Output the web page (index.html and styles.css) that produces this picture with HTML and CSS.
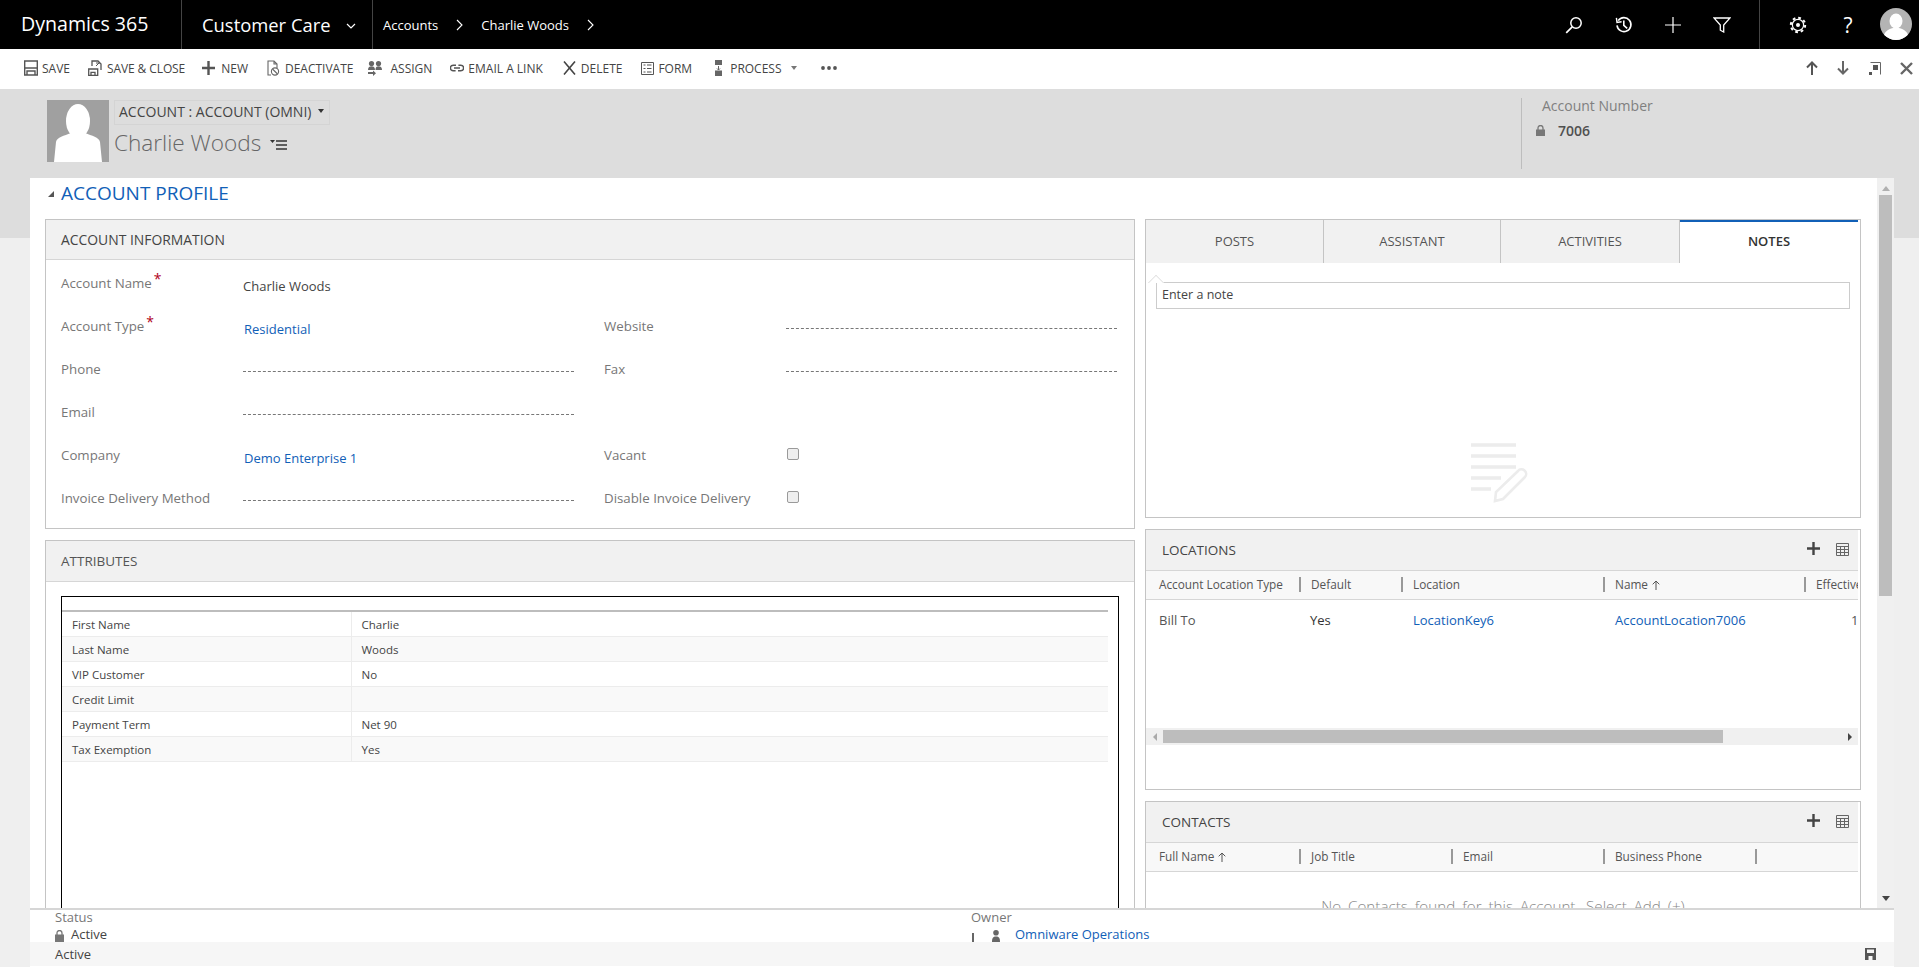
FILE: index.html
```html
<!DOCTYPE html>
<html lang="en">
<head>
<meta charset="utf-8">
<title>Charlie Woods - Dynamics 365</title>
<link rel="stylesheet" href="styles.css">
</head>
<body>
<header class="topbar">
  <div class="brand">Dynamics 365</div>
  <div class="app"><span>Customer Care</span>
    <svg class="chev" width="10" height="6" viewBox="0 0 10 6"><path d="M1 1l4 4 4-4" fill="none" stroke="#fff" stroke-width="1.2"/></svg>
  </div>
  <nav class="crumbs">
    <span>Accounts</span>
    <svg width="7" height="12" viewBox="0 0 7 12"><path d="M1 1l5 5-5 5" fill="none" stroke="#fff" stroke-width="1.1"/></svg>
    <span>Charlie Woods</span>
    <svg width="7" height="12" viewBox="0 0 7 12"><path d="M1 1l5 5-5 5" fill="none" stroke="#fff" stroke-width="1.1"/></svg>
  </nav>
  <div class="tools">
    <svg class="t-search" width="18" height="18" viewBox="0 0 18 18"><circle cx="11" cy="7" r="5.2" fill="none" stroke="#fff" stroke-width="1.5"/><path d="M7.2 10.8L1.2 16.8" stroke="#fff" stroke-width="1.7"/></svg>
    <svg class="t-hist" width="18" height="18" viewBox="0 0 18 18"><path d="M3.2 4.6A7 7 0 1 1 2 9.4" fill="none" stroke="#fff" stroke-width="1.6"/><path d="M1.4 1.8l.6 4.6 4.6-.6" fill="none" stroke="#fff" stroke-width="1.4"/><path d="M8.8 4.6v4.8l3.4 3" fill="none" stroke="#fff" stroke-width="1.6"/></svg>
    <svg class="t-plus" width="16" height="16" viewBox="0 0 16 16"><path d="M8 0v16M0 8h16" stroke="#fff" stroke-width="1.2"/></svg>
    <svg class="t-filter" width="18" height="16" viewBox="0 0 18 16"><path d="M1 1h16l-6.300 7v7l-3.400-1.800V8z" fill="none" stroke="#fff" stroke-width="1.300"/></svg>
  </div>
  <div class="tools2">
    <svg class="t-gear" width="18" height="18" viewBox="0 0 18 18"><circle cx="9" cy="9" r="7.200" fill="none" stroke="#fff" stroke-width="2" stroke-dasharray="2.800 2.850"/><circle cx="9" cy="9" r="5.600" fill="none" stroke="#fff" stroke-width="1.200"/><circle cx="9" cy="9" r="2" fill="#fff"/></svg>
    <span class="t-help">?</span>
    <svg class="t-avatar" width="32" height="32" viewBox="0 0 32 32"><defs><clipPath id="av"><circle cx="16" cy="16" r="16"/></clipPath></defs><circle cx="16" cy="16" r="16" fill="#b4b4b4"/><g clip-path="url(#av)" fill="#fff"><ellipse cx="16" cy="13" rx="6.500" ry="7.500"/><path d="M3 32c0-8 5-11 10-12h6c5 1 10 4 10 12z"/></g></svg>
  </div>
</header>

<div class="toolbar">
  <div class="cmds">
    <div class="cmd c-save"><svg width="14" height="16" viewBox="0 0 14 16"><path d="M.7 1h12.600v14H.7zM.7 8h12.600M3 15v-4h8v4" fill="none" stroke="#555" stroke-width="1.400"/></svg><span>SAVE</span></div>
    <div class="cmd c-close"><svg width="15" height="16" viewBox="0 0 15 16"><path d="M4 6V1h6l3 3v6M.7 9h9v6.300h-9zM3 15.300v-3h4v3" fill="none" stroke="#555" stroke-width="1.300"/><path d="M8 3h4M8 6l3-3" stroke="#555"/></svg><span>SAVE &amp; CLOSE</span></div>
    <div class="cmd c-new"><svg width="13" height="14" viewBox="0 0 13 14"><path d="M6.500 0v14M0 7h13" stroke="#555" stroke-width="2.400"/></svg><span>NEW</span></div>
    <div class="cmd c-deact"><svg width="14" height="16" viewBox="0 0 14 16"><path d="M5 15H2V1h6l3 3v4M8 1v3h3" fill="none" stroke="#666" stroke-width="1.100"/><circle cx="9" cy="11.500" r="3.600" fill="none" stroke="#666" stroke-width="1.100"/><path d="M6.500 9l5 5" stroke="#666" stroke-width="1.100"/></svg><span>DEACTIVATE</span></div>
    <div class="cmd c-assign"><svg width="16" height="16" viewBox="0 0 16 16" fill="#666"><circle cx="4.500" cy="3.500" r="2.600"/><circle cx="11.500" cy="3.500" r="2.600"/><path d="M1 10c0-3 1.500-3.800 3.500-3.800S8 7 8 10zM8.500 10c0-3 1-3.800 3-3.800s3.500.8 3.500 3.800z"/><path d="M1 12h5v-1.500l3 2.800-3 2.700V14H1z"/></svg><span>ASSIGN</span></div>
    <div class="cmd c-mail"><svg width="14" height="8" viewBox="0 0 14 8"><path d="M6 1.200H3.200a2.800 2.800 0 0 0 0 5.600h2.400M8 6.800h2.800a2.800 2.800 0 0 0 0-5.600H8.400M4 4h6" fill="none" stroke="#555" stroke-width="1.400"/></svg><span>EMAIL A LINK</span></div>
    <div class="cmd c-del"><svg width="13" height="14" viewBox="0 0 13 14"><path d="M1 .5l11 13M12 .5L1 13.500" stroke="#444" stroke-width="1.600"/></svg><span>DELETE</span></div>
    <div class="cmd c-form"><svg width="13" height="13" viewBox="0 0 13 13"><path d="M.5.500h12v12H.5z" fill="none" stroke="#555"/><path d="M2.500 3h2M2.500 6.500h2M2.500 10h2M6 3h4.500M6 6.500h4.500M6 10h4.500" stroke="#555" stroke-width="1.200"/></svg><span>FORM</span></div>
    <div class="cmd c-proc"><svg width="9" height="16" viewBox="0 0 9 16"><path d="M1 0h7v5H1zM1 10.500h7V16H1z" fill="#666"/><path d="M4.500 6v4M3 8.500l1.500 1.500L6 8.500" fill="none" stroke="#666"/></svg><span>PROCESS</span><i class="caret"></i></div>
    <div class="cmd c-more" aria-label="More"><svg width="16" height="4" viewBox="0 0 16 4" fill="#555"><circle cx="2" cy="2" r="1.900"/><circle cx="8" cy="2" r="1.900"/><circle cx="14" cy="2" r="1.900"/></svg></div>
  </div>
  <div class="navs">
    <svg width="12" height="14" viewBox="0 0 12 14"><path d="M6 14V1.500M1 6.500l5-5 5 5" fill="none" stroke="#555" stroke-width="2"/></svg>
    <svg width="12" height="14" viewBox="0 0 12 14"><path d="M6 0v12.500M1 7.500l5 5 5-5" fill="none" stroke="#666" stroke-width="2"/></svg>
    <svg width="13" height="13" viewBox="0 0 13 13"><path d="M2.500.5h10v12" fill="none" stroke="#666"/><path d="M1 10h3v3H1zM5 3h5v5H5z" fill="#555"/></svg>
    <svg width="13" height="13" viewBox="0 0 13 13"><path d="M1 1l11 11M12 1L1 12" stroke="#666" stroke-width="2.400"/></svg>
  </div>
</div>

<section class="rechead">
  <div class="photo"><svg width="62" height="62" viewBox="0 0 62 62"><rect width="62" height="62" fill="#a0a0a0"/><ellipse cx="31" cy="21" rx="12" ry="17" fill="#fff"/><path d="M7 62l2-20c1-5 8-6 15-9 4 3 10 3 14 0 7 3 14 4 15 9l2 20z" fill="#fff"/></svg></div>
  <div class="recid">
    <div class="formsel"><span>ACCOUNT : ACCOUNT (OMNI)</span><i class="caret dark"></i></div>
    <div class="recname"><span>Charlie Woods</span>
      <svg width="18" height="10" viewBox="0 0 18 10"><path d="M0 0h5L2.500 3z" fill="#333"/><path d="M6 1h11M6 5h11M6 9h11" stroke="#333" stroke-width="1.700"/></svg>
    </div>
  </div>
  <div class="acctnum">
    <div class="an-label">Account Number</div>
    <div class="an-val"><svg width="9" height="11" viewBox="0 0 9 11"><path d="M2 5V3a2.500 2.500 0 0 1 5 0v2" fill="none" stroke="#777" stroke-width="1.300"/><rect y="4.500" width="9" height="6.500" fill="#777"/></svg><span>7006</span></div>
  </div>
</section>

<main class="main">
  <div class="scrollarea">
    <div class="content">
      <h1 class="secttitle"><i class="tri"></i>ACCOUNT PROFILE</h1>
      <div class="cols">
        <div class="col-left">
          <section class="panel info">
            <h2 class="phead">ACCOUNT INFORMATION</h2>
            <div class="formgrid">
              <div class="lbl">Account Name<sup class="req">*</sup></div><div class="val">Charlie Woods</div><div></div><div></div><div></div>
              <div class="lbl">Account Type<sup class="req">*</sup></div><div class="val link">Residential</div><div></div><div class="lbl">Website</div><div class="dash"></div>
              <div class="lbl">Phone</div><div class="dash"></div><div></div><div class="lbl">Fax</div><div class="dash"></div>
              <div class="lbl">Email</div><div class="dash"></div><div></div><div></div><div></div>
              <div class="lbl">Company</div><div class="val link">Demo Enterprise 1</div><div></div><div class="lbl">Vacant</div><div class="chk"><input type="checkbox"></div>
              <div class="lbl">Invoice Delivery Method</div><div class="dash"></div><div></div><div class="lbl">Disable Invoice Delivery</div><div class="chk"><input type="checkbox"></div>
            </div>
          </section>
          <section class="panel attrs">
            <h2 class="phead soft">ATTRIBUTES</h2>
            <div class="attrbox">
              <table class="attrtable">
                <tr><td>First Name</td><td>Charlie</td></tr>
                <tr><td>Last Name</td><td>Woods</td></tr>
                <tr><td>VIP Customer</td><td>No</td></tr>
                <tr><td>Credit Limit</td><td></td></tr>
                <tr><td>Payment Term</td><td>Net 90</td></tr>
                <tr><td>Tax Exemption</td><td>Yes</td></tr>
              </table>
            </div>
          </section>
        </div>
        <div class="col-right">
          <section class="panel notes">
            <div class="tabs">
              <div class="tab">POSTS</div><div class="tab">ASSISTANT</div><div class="tab">ACTIVITIES</div><div class="tab on">NOTES</div>
            </div>
            <div class="notebody">
              <div class="noteinput">Enter a note</div>
              <svg class="noteicon" width="57" height="60" viewBox="0 0 57 60"><path d="M0 2h45M0 13h45M0 24h45M0 35h30M0 46h20" stroke="#ececec" stroke-width="3.500"/><path d="M24 58l1-9L47 28a4.500 4.500 0 0 1 7 6L32 56z" fill="#fff" stroke="#ececec" stroke-width="2.600"/></svg>
            </div>
          </section>
          <section class="panel locs">
            <div class="phead row"><h2>LOCATIONS</h2>
              <svg class="addi" width="13" height="13" viewBox="0 0 13 13"><path d="M6.500 0v13M0 6.500h13" stroke="#444" stroke-width="2.400"/></svg>
              <svg class="gridi" width="13" height="13" viewBox="0 0 13 13"><path d="M.5.500h12v12H.5zM.5 3.500h12M.5 6.500h12M.5 9.500h12M4.500 3.500v9M8.500 3.500v9" fill="none" stroke="#666"/></svg>
            </div>
            <div class="ghead loc"><div>Account Location Type</div><div>Default</div><div>Location</div><div>Name <svg class="sort" width="8" height="10" viewBox="0 0 8 10"><path d="M4 10V1M.7 4.300L4 1l3.300 3.300" fill="none" stroke="#555"/></svg></div><div class="effective">Effective</div></div>
            <div class="grow loc"><div>Bill To</div><div class="dark">Yes</div><div class="link">LocationKey6</div><div class="link">AccountLocation7006</div><div class="date">1/1/2018</div></div>
            <div class="hscroll"><i class="al"></i><div class="hthumb"></div><i class="ar"></i></div>
          </section>
          <section class="panel conts">
            <div class="phead row"><h2>CONTACTS</h2>
              <svg class="addi" width="13" height="13" viewBox="0 0 13 13"><path d="M6.500 0v13M0 6.500h13" stroke="#444" stroke-width="2.400"/></svg>
              <svg class="gridi" width="13" height="13" viewBox="0 0 13 13"><path d="M.5.500h12v12H.5zM.5 3.500h12M.5 6.500h12M.5 9.500h12M4.500 3.500v9M8.500 3.500v9" fill="none" stroke="#666"/></svg>
            </div>
            <div class="ghead con"><div>Full Name <svg class="sort" width="8" height="10" viewBox="0 0 8 10"><path d="M4 10V1M.7 4.300L4 1l3.300 3.300" fill="none" stroke="#555"/></svg></div><div>Job Title</div><div>Email</div><div>Business Phone</div><div></div></div>
            <div class="empty">No Contacts found for this Account. Select Add (+)</div>
          </section>
        </div>
      </div>
    </div>
    <div class="vscroll"><i class="au"></i><div class="vthumb"></div><i class="ad"></i></div>
  </div>
  <footer class="footer">
    <div class="fields">
      <div class="fld"><div class="flbl">Status</div><div class="fval"><svg width="9" height="12" viewBox="0 0 9 12"><path d="M2 5V3a2.500 2.500 0 0 1 5 0v2" fill="none" stroke="#777" stroke-width="1.300"/><rect y="4.500" width="9" height="7.500" fill="#777"/></svg><span>Active</span></div></div>
      <div class="fld"><div class="flbl">Owner</div><div class="fval own"><i class="stub"></i><svg width="8" height="12" viewBox="0 0 8 12" fill="#666"><circle cx="4" cy="2.800" r="2.800"/><path d="M0 12c0-4 1-5.500 4-5.500S8 8 8 12z"/></svg><span class="link">Omniware Operations</span></div></div>
    </div>
    <div class="statusbar"><span>Active</span><svg width="11" height="12" viewBox="0 0 11 12"><path d="M0 0h11v12H0z" fill="#555"/><path d="M2 1.500h7v3.500H2zM3.500 8h4v4h-4z" fill="#f6f6f6"/></svg></div>
  </footer>
</main>
</body>
</html>
```
FILE: styles.css
```css
*{box-sizing:border-box}
html,body{margin:0;height:967px;overflow:hidden}
body{font-family:"Open Sans","Noto Sans",sans-serif;font-size:13px;color:#444;background:linear-gradient(#ddd 238px,#efefef 238px)}
h1,h2{margin:0;font-weight:400}
.link{color:#1160b7}

.topbar{height:49px;background:#000;color:#fff;display:flex;align-items:center}
.brand{width:182px;height:49px;padding-left:21px;font-size:19.600px;line-height:48px;border-right:1px solid #444}
.app{width:191px;height:49px;padding-left:20px;font-size:18.400px;line-height:48px;border-right:1px solid #444;display:flex;align-items:center;gap:15px}
.chev{margin-top:2px}
.crumbs{display:flex;align-items:center;margin-left:10px;font-size:13px;gap:18px}
.tools{margin-left:auto;display:flex;align-items:center;gap:32px;width:194px;height:49px}
.tools2{height:49px;border-left:1px solid #444;width:160px;display:flex;align-items:center;padding-left:29px}
.t-help{font-size:21px;width:16px;margin-left:33px;text-align:center}
.t-avatar{margin-left:24px;margin-top:-2px}

.toolbar{height:40px;background:#fff;display:flex;align-items:center;justify-content:space-between;padding:0 6px 2px 24px}
.cmds{display:flex;align-items:center;gap:18px}
.cmd{display:flex;align-items:center;gap:4px;font-size:12px;color:#444;white-space:nowrap}
.c-close{gap:4px;letter-spacing:-.1px}
.c-new{gap:6px;margin-left:-1px}
.c-deact{gap:5px}
.c-assign{gap:7px;margin-left:-4px}
.c-del{gap:5px;margin-left:2px}
.c-form{margin-left:1px}
.c-proc{gap:7px;margin-left:4px}
.c-more{margin-left:6px}
.caret{display:inline-block;border:3px solid transparent;border-top:4px solid #777;border-bottom:0;margin-left:7px}
.c-proc .caret{margin-left:2px}
.caret.dark{border-top-color:#333}
.navs{display:flex;align-items:center;gap:19px}

.rechead{height:89px;display:flex;padding:11px 0 0 47px}
.photo{width:62px;height:62px;flex:none}
.photo svg{display:block}
.recid{margin-left:5px;width:1407px}
.formsel{width:216px;height:25px;border:1px solid #d4d4d4;display:flex;align-items:center;padding:0 0 3px 4px;font-size:14px;color:#444}
.recname{display:flex;align-items:center;gap:9px;font-size:22.600px;font-weight:300;color:#666;margin-top:1px;line-height:34px}
.recname svg{margin-top:3px}
.acctnum{border-left:1px solid #bdbdbd;height:71px;margin-top:-2px;padding-left:20px}
.an-label{font-size:14px;color:#808080;line-height:20px;margin-top:-2px}
.an-val{display:flex;align-items:center;gap:13px;font-size:14px;font-weight:600;color:#505050;margin:5px 0 0 -6px}

.main{margin:0 25px 0 30px;height:789px;display:flex;flex-direction:column}
.scrollarea{height:730px;display:flex;background:#fff}
.content{width:1847px;overflow:hidden;padding-left:15px}
.secttitle{height:41px;font-size:19px;line-height:30px;color:#1160b7;display:flex;align-items:center;padding:0 0 11px 3px}
.tri{width:0;height:0;border-style:solid;border-width:0 0 6px 6px;border-color:transparent transparent #555 transparent;margin:2px 7px 0 0}
.cols{display:flex;gap:10px}
.col-left{width:1090px;flex:none}
.col-right{width:716px;flex:none}
.panel{border:1px solid #c4c4c4;margin-bottom:11px;background:#fff}
.phead{height:40px;background:#f1f1f1;border-bottom:1px solid #d6d6d6;font-size:13.900px;font-weight:400;color:#444;line-height:40px;padding-left:15px}
.phead.soft{color:#555;font-size:13.500px}
.phead.row{display:flex;align-items:center;height:41px;margin-right:2px;padding-left:16px}
.phead.row h2{font-size:13.500px;flex:1}
.addi{margin:-4px 16px 0 0}
.gridi{margin:-2px 9px 0 0}

.info{height:310px}
.formgrid{display:grid;grid-template-columns:182px 331px 30px 182px 331px;grid-auto-rows:43px;padding:2px 0 0 15px}
.lbl{font-size:13.300px;color:#777;line-height:43px;white-space:nowrap}
.req{color:#b00020;font-size:14px;line-height:0;margin-left:2px;vertical-align:4px}
.val{font-size:13px;line-height:43px;padding-top:3px;color:#444}
.val.link{color:#1160b7;padding-left:1px}
.dash{height:43px}
.dash::after{content:"";display:block;border-top:1px dashed #777;transform:translateY(23px)}
.chk{display:flex;align-items:center;height:43px;padding:0 0 4px 1px}
.chk input{appearance:none;width:12px;height:12px;margin:0;border:1px solid #9a9a9a;border-radius:2px;background:#efefef}

.attrs{height:500px}
.attrs .phead{height:41px}
.attrbox{margin:14px 15px 0;height:420px;border:1px solid #000;padding:13px 10px 0 0}
.attrtable{width:100%;border-collapse:collapse;table-layout:fixed;border-top:2px solid #bdbdbd;font-size:11.500px}
.attrtable td{height:25px;padding:1px 0 0 10px;border-bottom:1px solid #ececec;color:#444}
.attrtable td:first-child{width:289px;border-right:1px solid #ececec}
.attrtable tr:nth-child(even){background:#f9f9f9}

.notes{height:299px}
.tabs{display:grid;grid-template-columns:178px 177px 179px 1fr;height:43px}
.tab{background:#f1f1f1;border-right:1px solid #c4c4c4;text-align:center;font-size:13px;line-height:42px;color:#555}
.tab.on{background:#fff;border-right:0;border-top:2px solid #1160b7;color:#333;font-weight:600;line-height:38px;margin-right:2px}
.notebody{display:flex;flex-direction:column;align-items:center}
.noteinput{width:694px;height:27px;margin:19px 0 0 0;border:1px solid #ccc;font-size:12.500px;line-height:24px;padding-left:5px;color:#444;position:relative}
.noteinput::before{content:"";position:absolute;left:-7px;top:-6px;width:11px;height:11px;border:solid #ddd;border-width:1px 0 0 1px;transform:rotate(45deg);background:#fff;clip-path:polygon(0 0,100% 0,0 100%)}
.noteicon{margin:134px 0 0 -8px}

.locs{height:261px}
.ghead{display:grid;height:29px;background:#f8f8f8;border-bottom:1px solid #d6d6d6;margin-right:2px;font-size:11.800px;font-weight:500;color:#555;overflow:hidden;align-items:center;padding-bottom:2px}
.ghead>div{border-left:2px solid #999;height:15px;line-height:15px;padding-left:10px;white-space:nowrap}
.ghead>div:first-child{border-left:0;padding-left:13px}
.loc{grid-template-columns:153px 102px 202px 201px 60px}
.con{grid-template-columns:153px 152px 152px 152px 1fr}
.grow{display:grid;height:128px;margin-right:2px;font-size:13px;overflow:hidden;align-content:start;padding-top:10px;color:#555;white-space:nowrap;line-height:20px}
.grow>div{padding-left:12px}
.grow>div:first-child{padding-left:13px}
.grow .dark{color:#333;padding-left:11px}
.grow .date{padding-left:47px}
.sort{margin-left:1px;vertical-align:-1px}
.hscroll{height:17px;margin-right:2px;background:#f0f0f0;display:flex;align-items:center}
.al{border:4px solid transparent;border-right:4px solid #aaa;border-left:0;margin:0 6px 0 7px}
.ar{border:4px solid transparent;border-left:4px solid #444;border-right:0;margin:0 6px 0 auto}
.hthumb{width:560px;height:13px;background:#bdbdbd}
.conts{height:300px}
.empty{margin-top:24px;text-align:center;font-size:15.200px;font-weight:300;color:#888;word-spacing:3px}

.vscroll{width:17px;background:#f0f0f0;display:flex;flex-direction:column;align-items:center}
.au{border:4px solid transparent;border-bottom:5px solid #b0b0b0;border-top:0;margin:8px 0 4px}
.ad{border:4px solid transparent;border-top:5px solid #444;border-bottom:0;margin:auto 0 7px}
.vthumb{width:13px;height:401px;background:#bdbdbd}

.footer{height:59px;background:#fff;border-top:2px solid #d6d6d6}
.fields{height:32px;display:grid;grid-template-columns:916px 1fr;padding-left:25px;overflow:hidden;font-size:13px}
.flbl{color:#777;line-height:15px}
.fval{display:flex;align-items:flex-start;gap:7px;height:17px;line-height:18px}
.fval svg{margin-top:5px;flex:none}
.own{gap:0}
.stub{width:2px;height:12px;background:#666;margin:8px 18px 0 1px;display:block}
.own .link{margin-left:15px}
.statusbar{height:24px;background:#f6f6f6;display:flex;align-items:center;justify-content:space-between;padding:0 18px 0 25px;font-size:13px;color:#444}
```
